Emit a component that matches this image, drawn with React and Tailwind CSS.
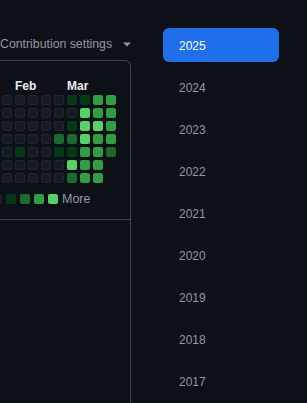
import React from "react";

const LEVEL = {
  "0": "bg-[#151b23] shadow-[inset_0_0_0_1px_rgba(240,246,252,0.05)]",
  "1": "bg-[#033a16]",
  "2": "bg-[#196c2e]",
  "3": "bg-[#2ea043]",
  "4": "bg-[#56d364]",
};

const ROWS = [
  "000001133",
  "000000433",
  "000001443",
  "000022433",
  "010011332",
  "00000433-",
  "00000233-",
];

const YEARS = ["2025", "2024", "2023", "2022", "2021", "2020", "2019", "2018", "2017"];

function Cell({ level }) {
  if (level === "-") return <div className="w-[10px] h-[10px]" />;
  return <div className={`w-[10px] h-[10px] rounded-[2px] ${LEVEL[level]}`} />;
}

export default function App() {
  return (
    <div
      className="flex w-[307px] h-[403px] overflow-hidden bg-[#0d1117]"
      style={{ fontFamily: '"Liberation Sans", Arial, sans-serif' }}
    >
      {/* Left column */}
      <div className="w-[131px] shrink-0 flex flex-col">
        <div className="flex items-center h-[16px] mt-[36px] mb-[8px] text-[12.3px] leading-[16px] text-[#9198a1] whitespace-nowrap">
          <span>Contribution settings</span>
          <svg className="ml-[11px]" width="8" height="5" viewBox="0 0 8 5">
            <path d="M0 0.5 L8 0.5 L4 4.5 Z" fill="#9198a1" />
          </svg>
        </div>
        <div className="flex-1 flex flex-col border-t border-r border-[#3d444d] rounded-tr-[6px]">
          <div className="pt-[19px] pl-[2px]">
            <div className="grid grid-cols-[repeat(9,10px)] gap-x-[3px] h-[13px] text-[12px] leading-[13px] font-semibold text-[#e6edf3] whitespace-nowrap">
              <span className="col-start-2">Feb</span>
              <span className="col-start-6">Mar</span>
            </div>
            <div className="mt-[2px] flex flex-col gap-[3px]">
              {ROWS.map((r, i) => (
                <div key={i} className="flex gap-[3px]">
                  {r.split("").map((c, j) => (
                    <Cell key={j} level={c} />
                  ))}
                </div>
              ))}
            </div>
          </div>
          <div className="mt-[11px] ml-[-8px] flex items-center gap-[4px] h-[10px]">
            <Cell level="0" />
            <Cell level="1" />
            <Cell level="2" />
            <Cell level="3" />
            <Cell level="4" />
            <span className="text-[12.5px] leading-[14px] text-[#9198a1]">More</span>
          </div>
          <div className="mt-[15px] border-t border-[#3d444d] flex-1" />
        </div>
      </div>

      {/* Year list */}
      <div className="pl-[32px] pt-[28px] flex flex-col gap-[8px]">
        {YEARS.map((y, i) => (
          <div
            key={y}
            className={`w-[116px] h-[34px] shrink-0 flex items-center pl-[16px] pt-[1px] rounded-[6px] text-[12px] ${
              i === 0 ? "bg-[#1f6feb] text-white" : "text-[#9198a1]"
            }`}
          >
            {y}
          </div>
        ))}
      </div>
    </div>
  );
}
